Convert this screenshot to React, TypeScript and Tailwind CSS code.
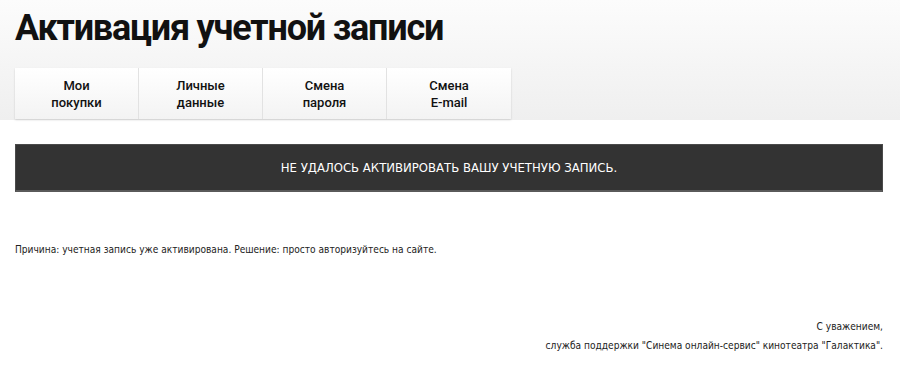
const tabs = [
  ['Мои', 'покупки'],
  ['Личные', 'данные'],
  ['Смена', 'пароля'],
  ['Смена', 'E-mail'],
];

const App = () => {
  return (
    <div className="min-h-[366px] bg-white font-['DejaVu_Sans_Condensed',sans-serif]">
      <header className="bg-gradient-to-b from-[#fcfcfc] to-[#efefef] h-[120px] px-[15px] pt-[6px]">
        <h1 className="text-[36px] leading-[44px] font-bold text-[#111] tracking-[-1.2px] font-['Roboto',sans-serif]">
          Активация учетной записи
        </h1>
        <nav className="mt-[18px] flex w-[496px] shadow-[0_1px_2px_rgba(0,0,0,0.15)]">
          {tabs.map((t, i) => (
            <div
              key={i}
              className="w-[124px] h-[51px] flex flex-col items-center justify-center bg-gradient-to-b from-white to-[#f3f3f3] border-r border-[#e2e2e2] last:border-r-0 text-[13px] leading-[17px] text-[#111] font-medium font-['Roboto',sans-serif]"
            >
              <span>{t[0]}</span>
              <span>{t[1]}</span>
            </div>
          ))}
        </nav>
      </header>

      <div className="pl-[15px] pr-[17px] pt-[24px]">
        <div className="h-[48px] bg-[#333333] border border-[#4a4a4a] border-b-2 border-b-[#5a5a5a] flex items-center justify-center">
          <span className="text-white text-[13px] uppercase">
            Не удалось активировать вашу учетную запись.
          </span>
        </div>

        <p className="mt-[51px] text-[10.1px] leading-[14px] text-[#222]">
          Причина: учетная запись уже активирована. Решение: просто авторизуйтесь на сайте.
        </p>

        <div className="mt-[60px] text-right text-[10.1px] leading-[19px] text-[#222]">
          <p>С уважением,</p>
          <p>служба поддержки "Синема онлайн-сервис" кинотеатра "Галактика".</p>
        </div>
      </div>
    </div>
  );
};

export default App;
